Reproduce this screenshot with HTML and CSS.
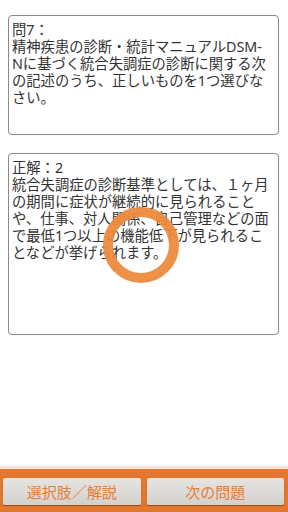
FILE: index.html
```html
<!DOCTYPE html>
<html lang="ja">
<head>
    <meta charset="UTF-8">
    <meta name="viewport" content="width=device-width, initial-scale=1.0">
    <title>問題</title>
    <link rel="stylesheet" href="styles.css">
</head>
<body>
    <div class="content">
        <div class="panel question">
            <div class="panel-title">問7：</div>
            <div class="panel-text">精神疾患の診断・統計マニュアルDSM-Nに基づく統合失調症の診断に関する次の記述のうち、正しいものを1つ選びなさい。</div>
        </div>
        <div class="panel answer">
            <div class="panel-title">正解：2</div>
            <div class="panel-text">統合失調症の診断基準としては、１ヶ月の期間に症状が継続的に見られることや、仕事、対人関係、自己管理などの面で最低1つ以上の機能低下が見られることなどが挙げられます。</div>
        </div>
    </div>

    <div class="spinner"></div>

    <footer class="toolbar">
        <button class="tool-btn">選択肢／解説</button>
        <button class="tool-btn">次の問題</button>
    </footer>
</body>
</html>
```

FILE: styles.css
```css
body {
    margin: 0;
    padding: 0;
    height: 512px;
    display: flex;
    flex-direction: column;
    background-color: #ffffff;
    font-family: "Noto Sans", "Noto Sans CJK JP", sans-serif;
    color: #333333;
    overflow: hidden;
}

.content {
    flex: 1;
    padding: 15px 9px 0 8px;
}

.panel {
    box-sizing: border-box;
    border: 1px solid #8a8a8a;
    border-radius: 4px;
    padding: 5px 7px 0 3px;
    font-size: 14.3px;
    line-height: 17px;
    word-break: break-all;
}

.question {
    height: 120px;
}

.answer {
    height: 182px;
    margin-top: 18px;
}

.spinner {
    position: absolute;
    left: 103px;
    top: 207px;
    width: 56px;
    height: 56px;
    border: 10px solid #ec8a3e;
    border-radius: 50%;
    opacity: 0.95;
}

.toolbar {
    display: flex;
    gap: 6px;
    padding: 9px 4px 7px 3px;
    background-color: #e3772f;
    border-top: 3px solid #f6e3d6;
}

.tool-btn {
    flex: 1;
    height: 27px;
    border: none;
    border-radius: 2px;
    background: linear-gradient(#e6e4e1, #d4d1cd);
    box-shadow: 0 1px 1px rgba(80, 30, 0, 0.5);
    color: #e47e3a;
    font-family: "Noto Sans CJK JP", sans-serif;
    font-size: 15px;
    padding: 0;
}
```
